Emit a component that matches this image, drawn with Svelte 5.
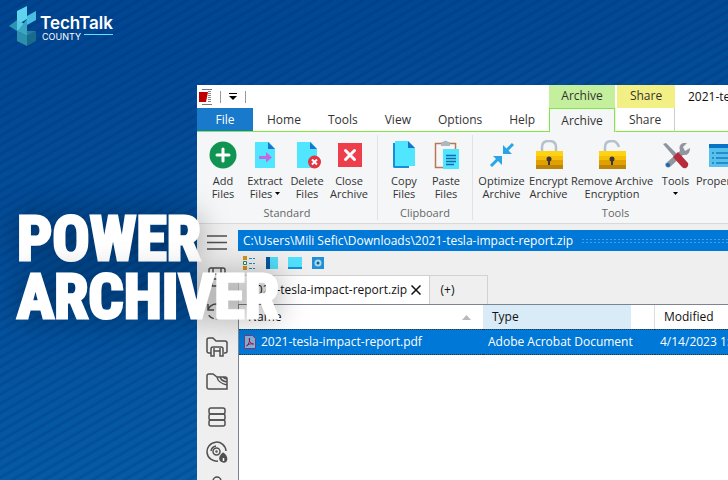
<script lang="ts">
	type Tool = { icon: string; lines: string[]; size: string; menu?: boolean };
	type Group = { name: string; size: string; tools: Tool[] };

	const tabs = ['Home', 'Tools', 'View', 'Options', 'Help'];

	const groups: Group[] = [
		{
			name: 'Standard',
			size: 'standard',
			tools: [
				{ icon: 'add', lines: ['Add', 'Files'], size: 'small' },
				{ icon: 'extract', lines: ['Extract', 'Files'], size: 'small', menu: true },
				{ icon: 'delete', lines: ['Delete', 'Files'], size: 'small' },
				{ icon: 'close', lines: ['Close', 'Archive'], size: 'small' }
			]
		},
		{
			name: 'Clipboard',
			size: 'clipboard',
			tools: [
				{ icon: 'copy', lines: ['Copy', 'Files'], size: 'small' },
				{ icon: 'paste', lines: ['Paste', 'Files'], size: 'small' }
			]
		},
		{
			name: 'Tools',
			size: 'tools',
			tools: [
				{ icon: 'optimize', lines: ['Optimize', 'Archive'], size: 'medium' },
				{ icon: 'lock', lines: ['Encrypt', 'Archive'], size: 'medium' },
				{ icon: 'unlock', lines: ['Remove Archive', 'Encryption'], size: 'wide' },
				{ icon: 'wrench', lines: ['Tools', ''], size: 'medium', menu: true },
				{ icon: 'props', lines: ['Properties'], size: 'medium' }
			]
		}
	];

	const side = ['menu', 'save', 'history', 'printer', 'network', 'drives', 'disc', 'user'];
	const views = ['details', 'panel', 'preview', 'settings'];
	const files = [
		{ name: '2021-tesla-impact-report.pdf', type: 'Adobe Acrobat Document', modified: '4/14/2023 1:53 PM' }
	];

	let selected = $state(0);
</script>

<div class="page">
	<header class="brand">
		<svg class="mark" width="28" height="42" viewBox="0 0 28 42" aria-hidden="true">
			<path d="M8 5 18 0v13l-10 6z" fill="#5fd4ee" />
			<path d="M18 10l9-5v9l-9 5z" fill="#48bfe0" />
			<path d="M0 20l8-6v11z" fill="#2b93b5" />
			<path d="M8 14l10 5-10 6z" fill="#58c8e3" />
			<path d="M18 13v12l-10 1z" fill="#37a5c5" />
			<path d="M8 25l10-7v12z" fill="#3aa6c2" />
			<path d="M8 25l10 5v10l-10-5z" fill="#2c8fae" />
			<path d="M18 30l9-5v10l-9 5z" fill="#176b8d" />
			<path d="M18 25l9 0-9 5z" fill="#237f9b" />
		</svg>
		<div class="wordmark">
			<span class="word">TechTalk</span>
			<span class="under"><span class="county">COUNTY</span><span class="rule"></span></span>
		</div>
	</header>

	<main class="window">
		<div class="top">
			<div class="quick">
				<svg width="13" height="16" viewBox="0 0 13 16" aria-hidden="true">
					<path d="M0 3h9L7 13H0z" fill="#c00000" />
					<path d="M3 .5h10M3 15.5h10" stroke="#777" />
					<path d="M10.500 2v12" stroke="#888" stroke-width="3" stroke-dasharray="1 1" />
				</svg>
				<span class="bar"></span>
				<button class="more" aria-label="Customize toolbar">
					<svg width="8" height="7" viewBox="0 0 8 7"><path d="M0 0h8v1H0zM0 3h8L4 7z" /></svg>
				</button>
				<span class="bar"></span>
			</div>
			<div class="context green">Archive</div>
			<div class="context yellow">Share</div>
			<div class="title">2021-tesla-impact-report.zip - PowerArchiver</div>
			<nav class="tabs">
				<button class="file">File</button>
				{#each tabs as tab}
					<button class="tab">{tab}</button>
				{/each}
			</nav>
			<button class="tab current">Archive</button>
			<button class="tab share">Share</button>
			<div class="fill"></div>
		</div>

		<div class="ribbon">
			{#each groups as group}
				<section class="group {group.size}">
					<div class="tools-row">
						{#each group.tools as tool}
							<button class="tool {tool.size}">
								{@render toolIcon(tool.icon)}
								{#each tool.lines as line, i}
									<span class="line">
										{line}{#if tool.menu && i === 1}<svg class="caret" width="5" height="3" viewBox="0 0 5 3"><path d="M0 0h5L2.500 3z" /></svg>{/if}
									</span>
								{/each}
							</button>
						{/each}
					</div>
					<div class="group-name">{group.name}</div>
				</section>
			{/each}
		</div>

		<div class="body">
			<aside class="side">
				{#each side as name}
					<button aria-label={name}>{@render sideIcon(name)}</button>
				{/each}
			</aside>
			<section class="content">
				<div class="address"><span>C:\Users\Mili Sefic\Downloads\2021-tesla-impact-report.zip</span><i></i></div>
				<div class="views">
					{#each views as name}
						<button aria-label={name}>{@render viewIcon(name)}</button>
					{/each}
				</div>
				<div class="docs">
					<div class="doc">
						<span>2021-tesla-impact-report.zip</span>
						<button aria-label="Close tab">
							<svg width="10" height="10" viewBox="0 0 10 10"><path d="M0.500 0.500l9 9M9.500 0.500l-9 9" stroke="#111" stroke-width="1.500" /></svg>
						</button>
					</div>
					<button class="new">(+)</button>
				</div>
				<div class="list">
					<table>
						<colgroup>
							<col class="col-name" />
							<col class="col-type" />
							<col class="col-gap" />
							<col />
						</colgroup>
						<thead>
							<tr>
								<th><span class="sorted">Name<svg width="9" height="5" viewBox="0 0 9 5"><path d="M0 5h9L4.500 0z" fill="#b9b9b9" /></svg></span></th>
								<th class="type">Type</th>
								<th class="gap"></th>
								<th>Modified</th>
							</tr>
						</thead>
						<tbody>
							{#each files as file, i}
								<tr class:selected={selected === i} onclick={() => (selected = i)}>
									<td>
										<span class="file-name">
											<svg width="12" height="14" viewBox="0 0 12 14">
												<path d="M.5.5h8l3 3v10H.5z" fill="#83afd8" stroke="#793d70" />
												<path d="M2.500 11C5 9 6 6 5.500 3c-1 3 1 5.500 4 6-3-.5-5 0-7 2" fill="none" stroke="#8d1c44" />
											</svg>
											{file.name}
										</span>
									</td>
									<td colspan="2">{file.type}</td>
									<td>{file.modified}</td>
								</tr>
							{/each}
						</tbody>
					</table>
				</div>
			</section>
		</div>
	</main>

	<h1>Power<br />Archiver</h1>
</div>

{#snippet toolIcon(name: string)}
	<svg width="28" height="30" viewBox="0 0 28 30" aria-hidden="true">
		{#if name === 'add'}
			<circle cx="14" cy="15" r="13.500" fill="#109451" />
			<path d="M14 9v12M8 15h12" stroke="#fff" stroke-width="3" stroke-linecap="round" />
		{:else if name === 'extract' || name === 'delete'}
			<path d="M4 2h14l6 7v19H4z" fill="#50e6ff" />
			<path d="M17 2l7 7h-7z" fill="#1b75d0" />
			{#if name === 'extract'}
				<path d="M8 16h7v-4l6 5.500-6 5V19H8z" fill="#c069e2" />
			{:else}
				<circle cx="21.500" cy="22" r="6.500" fill="#e33442" />
				<path d="M19 19.500l5 5M24 19.500l-5 5" stroke="#fff" stroke-width="2" />
			{/if}
		{:else if name === 'close'}
			<path d="M3 3h24v24H3z" fill="#ef3e4b" />
			<path d="M10.500 10.500l9 9M19.500 10.500l-9 9" stroke="#fff" stroke-width="3" stroke-linecap="round" />
		{:else if name === 'copy'}
			<path d="M3 3h16v25H4l-1-1z" fill="#198ed8" />
			<path d="M5 1h13l7 7v18H5z" fill="#50e6ff" />
			<path d="M18 1l7 7h-7z" fill="#1972cc" />
		{:else if name === 'paste'}
			<path d="M3.500 3.500h20v24h-20z" fill="#f6f6f6" stroke="#b97855" stroke-width="1.500" />
			<path d="M9 2h2a3 3 0 0 1 5 0h2v4H9z" fill="#aeb6c0" />
			<path d="M11 9h16v20H11z" fill="#50e6ff" />
			<path d="M14 15.500h10M14 18.500h10M14 21.500h10M14 24.500h8" stroke="#1767ad" stroke-width="1.500" />
		{:else if name === 'optimize'}
			<path d="M3 26l8-8M25 4l-8 8" stroke="#28a4e7" stroke-width="3" />
			<path d="M5 16h9v9l-3-3-4-4zM15 5v9h9l-3-3-4-4z" fill="#28a4e7" />
		{:else if name === 'lock' || name === 'unlock'}
			{#if name === 'lock'}
				<path d="M7 12V7q0-6 7-6t7 6v5" fill="none" stroke="#b4c2cd" stroke-width="2.500" />
			{:else}
				<path d="M7 12V7q0-6 7-6 5 0 7 6" fill="none" stroke="#b4c2cd" stroke-width="2.500" />
			{/if}
			<path d="M1 11h27v18H1z" fill="#f4bd09" />
			<path d="M1 11h27v5H1z" fill="#ffd312" />
			<path d="M1 20h27v5H1z" fill="#dfa000" />
			<path d="M1 25h27v4H1z" fill="#bd8507" />
			<circle cx="14" cy="19" r="2.500" fill="#38353f" />
			<path d="M13 20h2v5h-2z" fill="#38353f" />
		{:else if name === 'wrench'}
			<path d="M3 24L18 11q-2-6 3-8l4 0-4 4 2 4 5-3q0 8-7 7L8 27q-4 2-5-3" fill="#91969f" />
			<path d="M1 4l3-1 12 12-3 3z" fill="#8c949e" />
			<path d="M11 17l5-5 10 11q1 3-2 5-2 1-4-1z" fill="#b72c3c" />
			<circle cx="6" cy="25" r="2" fill="#1368b7" />
		{:else if name === 'props'}
			<path d="M0 4h28v23H0z" fill="#57c0eb" />
			<path d="M0 4h28v4H0z" fill="#0874c5" />
			<path d="M3 13h2M3 18h2M3 23h2M7 13h18M7 18h18M7 23h18" stroke="#147bc6" stroke-width="1.500" />
		{/if}
	</svg>
{/snippet}

{#snippet sideIcon(name: string)}
	<svg width="22" height="22" viewBox="0 0 22 22" aria-hidden="true">
		{#if name === 'menu'}
			<path d="M1 5h20M1 11.500h20M1 18h20" />
		{:else if name === 'save'}
			<path d="M4 2h13q2 0 2 2v14q0 2-2 2H5q-2 0-2-2V4q0-2 2-2M7 2v6h8V2M6 20v-7h10v7" />
		{:else if name === 'history'}
			<path d="M2 3v6h6M2 9a9 9 0 0 1 17 0" />
			<path d="M19 9a9 9 0 0 1-17 4" stroke-dasharray="6 2" />
		{:else if name === 'printer'}
			<path d="M5 17H3q-2 0-2-2V4q0-2 2-2h4l3 3h9q2 0 2 2v8q0 2-2 2h-1" />
			<path d="M5 17v-4q0-2 2-2h8q2 0 2 2v7h-3v-5H8v5H5zM8 15v-3M14 15v-3" />
		{:else if name === 'network'}
			<path d="M3 3h4l4 3h8q2 0 2 2v10H3q-2 0-2-2V5q0-2 2-2M11 6q1 6 10 8M14 6q1 4 7 5M17 6q1 2 4 2" />
		{:else if name === 'drives'}
			<rect x="3" y="2" width="16" height="6" rx="2" />
			<rect x="3" y="8" width="16" height="6" rx="2" />
			<rect x="3" y="14" width="16" height="6" rx="2" />
		{:else if name === 'disc'}
			<path d="M12 20A9.500 9.500 0 1 1 20 10M5 10a6 6 0 0 1 5-5" />
			<circle cx="10.500" cy="10.500" r="3.500" />
			<circle cx="10.500" cy="10.500" r=".5" />
			<path d="M17 12q5 4 3 8-2 2-5 0-3-3 2-8" fill="#505050" />
			<path d="M17.500 17v3" stroke="#fff" />
		{:else}
			<circle cx="11" cy="5" r="4" />
			<path d="M3 19q1-8 8-8t8 8z" />
		{/if}
	</svg>
{/snippet}

{#snippet viewIcon(name: string)}
	<svg width="14" height="14" viewBox="0 0 14 14" aria-hidden="true">
		{#if name === 'details'}
			<path d="M1 0h4v4H1zM1 10h4v4H1z" fill="#d49222" />
			<path d="M1.500 5.500h3v3h-3z" fill="#fff" stroke="#2b8b4b" />
			<path d="M7 2.500h6M7 7.500h6M7 12.500h6" stroke="#248acb" stroke-dasharray="3 1" />
		{:else if name === 'panel'}
			<path d="M1 1h4v12H1z" fill="#07569f" />
			<path d="M5 1h8v12H5z" fill="#50dcf7" />
		{:else if name === 'preview'}
			<path d="M0 1h14v11H0z" fill="#50e0fb" />
			<path d="M0 11h14v2H0z" fill="#158dd4" />
		{:else}
			<path d="M1 1h12v12H1z" fill="#238ed8" />
			<circle cx="7" cy="7" r="3.500" fill="#a9dbed" />
			<circle cx="7" cy="7" r="1.500" fill="#245986" />
		{/if}
	</svg>
{/snippet}

<style>
	:global(body) {
		margin: 0;
		background: #044b94;
	}
	.page {
		position: relative;
		box-sizing: border-box;
		height: 100vh;
		overflow: hidden;
		display: flex;
		flex-direction: column;
		font: 12px/16px 'Open Sans', 'Noto Sans', sans-serif;
		color: #333;
		background:
			repeating-linear-gradient(150deg, transparent 0 3px, rgba(0, 35, 95, 0.22) 6px, transparent 8px),
			linear-gradient(170deg, #004591, #04529e 55%, #0561ac);
	}
	button {
		font: inherit;
		color: inherit;
		border: 0;
		padding: 0;
		background: none;
	}
	svg {
		display: block;
		flex: none;
	}

	.brand {
		display: flex;
		flex: none;
		box-sizing: border-box;
		height: 85px;
		padding: 6px 9px;
		gap: 3px;
		color: #fff;
	}
	.wordmark {
		padding-top: 8px;
		font-family: Inter, sans-serif;
	}
	.word {
		display: block;
		font-size: 17px;
		line-height: 18px;
		font-weight: 600;
	}
	.under {
		display: flex;
		gap: 3px;
		padding-left: 2px;
		font-size: 9px;
		line-height: 10px;
	}
	.rule {
		flex: 1;
		height: 1px;
		margin-top: 2px;
		background: #5be4ff;
	}

	.window {
		flex: 1;
		min-height: 0;
		margin-left: 197px;
		display: flex;
		flex-direction: column;
		background: #fff;
		overflow: hidden;
	}
	.top {
		flex: none;
		display: grid;
		grid-template-columns: 352px 66px 60px 1fr;
		grid-template-rows: 23px 24px;
	}
	.quick {
		display: flex;
		align-items: center;
		gap: 8px;
		padding-left: 2px;
	}
	.bar {
		width: 1px;
		height: 12px;
		background: #999;
	}
	.context {
		text-align: center;
		line-height: 21px;
	}
	.green {
		background: #c4ef9c;
	}
	.yellow {
		margin-left: 2px;
		background: #f2ef85;
	}
	.title {
		padding-left: 13px;
		line-height: 23px;
		white-space: nowrap;
		overflow: hidden;
		color: #111;
	}
	.tabs {
		display: flex;
		gap: 1px;
	}
	.tabs,
	.share,
	.fill {
		border-bottom: 1px solid #82e642;
	}
	.file {
		flex: none;
		width: 56px;
		color: #fff;
		background: #1979ca;
	}
	.tab {
		padding: 0 13px;
	}
	.current {
		padding: 0;
		border: 1px solid #82e642;
		border-bottom: 0;
		background: #f5f6f7;
	}
	.share {
		padding: 0;
		border-left: 1px solid #eee;
		border-right: 1px solid #ccc;
	}

	.ribbon {
		flex: none;
		display: flex;
		height: 91px;
		background: #f5f6f7;
		border-bottom: 1px solid #d8d9da;
		font-size: 11px;
	}
	.group {
		flex: none;
		box-sizing: border-box;
		margin: 3px 0;
		padding: 3px 5px 0;
		border-right: 1px solid #e1e2e4;
	}
	.standard {
		width: 181px;
	}
	.clipboard {
		width: 95px;
	}
	.tools {
		width: 286px;
	}
	.tools-row {
		display: flex;
	}
	.tool {
		flex: none;
		display: flex;
		flex-direction: column;
		align-items: center;
		height: 68px;
		padding-top: 2px;
		line-height: 13px;
		white-space: nowrap;
		box-sizing: border-box;
	}
	.tool > svg {
		margin-bottom: 4px;
	}
	.small {
		width: 42px;
	}
	.medium {
		width: 47px;
	}
	.wide {
		width: 80px;
	}
	.line {
		display: flex;
		align-items: center;
		gap: 3px;
		height: 13px;
	}
	.group-name {
		text-align: center;
		line-height: 14px;
		color: #666;
	}

	.body {
		flex: 1;
		min-height: 0;
		display: flex;
		background: #efefef;
	}
	.side {
		flex: none;
		width: 41px;
		padding-top: 6px;
	}
	.side button {
		display: flex;
		align-items: center;
		height: 23px;
		margin: 0 0 12px 9px;
	}
	.side svg {
		fill: none;
		stroke: #505050;
		stroke-width: 1.5;
	}
	.content {
		flex: 1;
		min-width: 0;
		display: flex;
		flex-direction: column;
		padding-top: 6px;
	}
	.address {
		flex: none;
		display: flex;
		align-items: center;
		gap: 8px;
		height: 21px;
		padding-left: 5px;
		color: #fff;
		background: #0078d7;
		white-space: nowrap;
	}
	.address i {
		flex: 1;
		height: 6px;
		background: radial-gradient(circle, #3da1ed 1px, transparent 1px) 0 0 / 4px 3px;
	}
	.views {
		flex: none;
		display: flex;
		align-items: center;
		gap: 9px;
		height: 24px;
		padding-left: 4px;
	}
	.docs {
		flex: none;
		display: flex;
		height: 29px;
		color: #111;
	}
	.doc {
		display: flex;
		box-sizing: border-box;
		align-items: center;
		gap: 4px;
		width: 192px;
		padding-left: 10px;
		white-space: nowrap;
		background: #fff;
		border: 1px solid #d0d0d0;
		border-bottom: 0;
	}
	.new {
		width: 58px;
		padding-right: 22px;
		border: 1px solid #d2d2d2;
		border-left: 0;
		border-bottom: 0;
	}
	.list {
		flex: 1;
		overflow: hidden;
		background: #fff;
		border-left: 1px solid #7d8491;
		border-top: 1px solid #7d8491;
	}
	table {
		table-layout: fixed;
		width: 100%;
		border-spacing: 0;
		color: #111;
		white-space: nowrap;
	}
	.col-name {
		width: 244px;
	}
	.col-type {
		width: 148px;
	}
	.col-gap {
		width: 24px;
	}
	th {
		height: 24px;
		padding: 0 9px;
		text-align: left;
		font-weight: 400;
	}
	.sorted {
		display: flex;
		align-items: center;
		justify-content: space-between;
		padding-right: 3px;
	}
	.type {
		background: #d9ebf7;
	}
	.gap {
		border-right: 1px solid #ddd;
	}
	td {
		height: 24px;
		padding: 0 5px;
	}
	.selected td {
		color: #fff;
		background: #0078d7;
		border-top: 1px dotted #333;
		border-bottom: 1px dotted #333;
	}
	.file-name {
		display: flex;
		align-items: center;
		gap: 5px;
	}

	/* Headline laid across the application window */
	h1 {
		position: absolute;
		top: 210px;
		left: 17px;
		margin: 0;
		font: 700 62px/58px 'Roboto Condensed', 'Liberation Sans Narrow', sans-serif;
		text-transform: uppercase;
		color: #fff;
		-webkit-text-stroke: 3px #fff;
		text-shadow: 0 0 30px rgba(0, 0, 0, 0.5);
		pointer-events: none;
	}
</style>
